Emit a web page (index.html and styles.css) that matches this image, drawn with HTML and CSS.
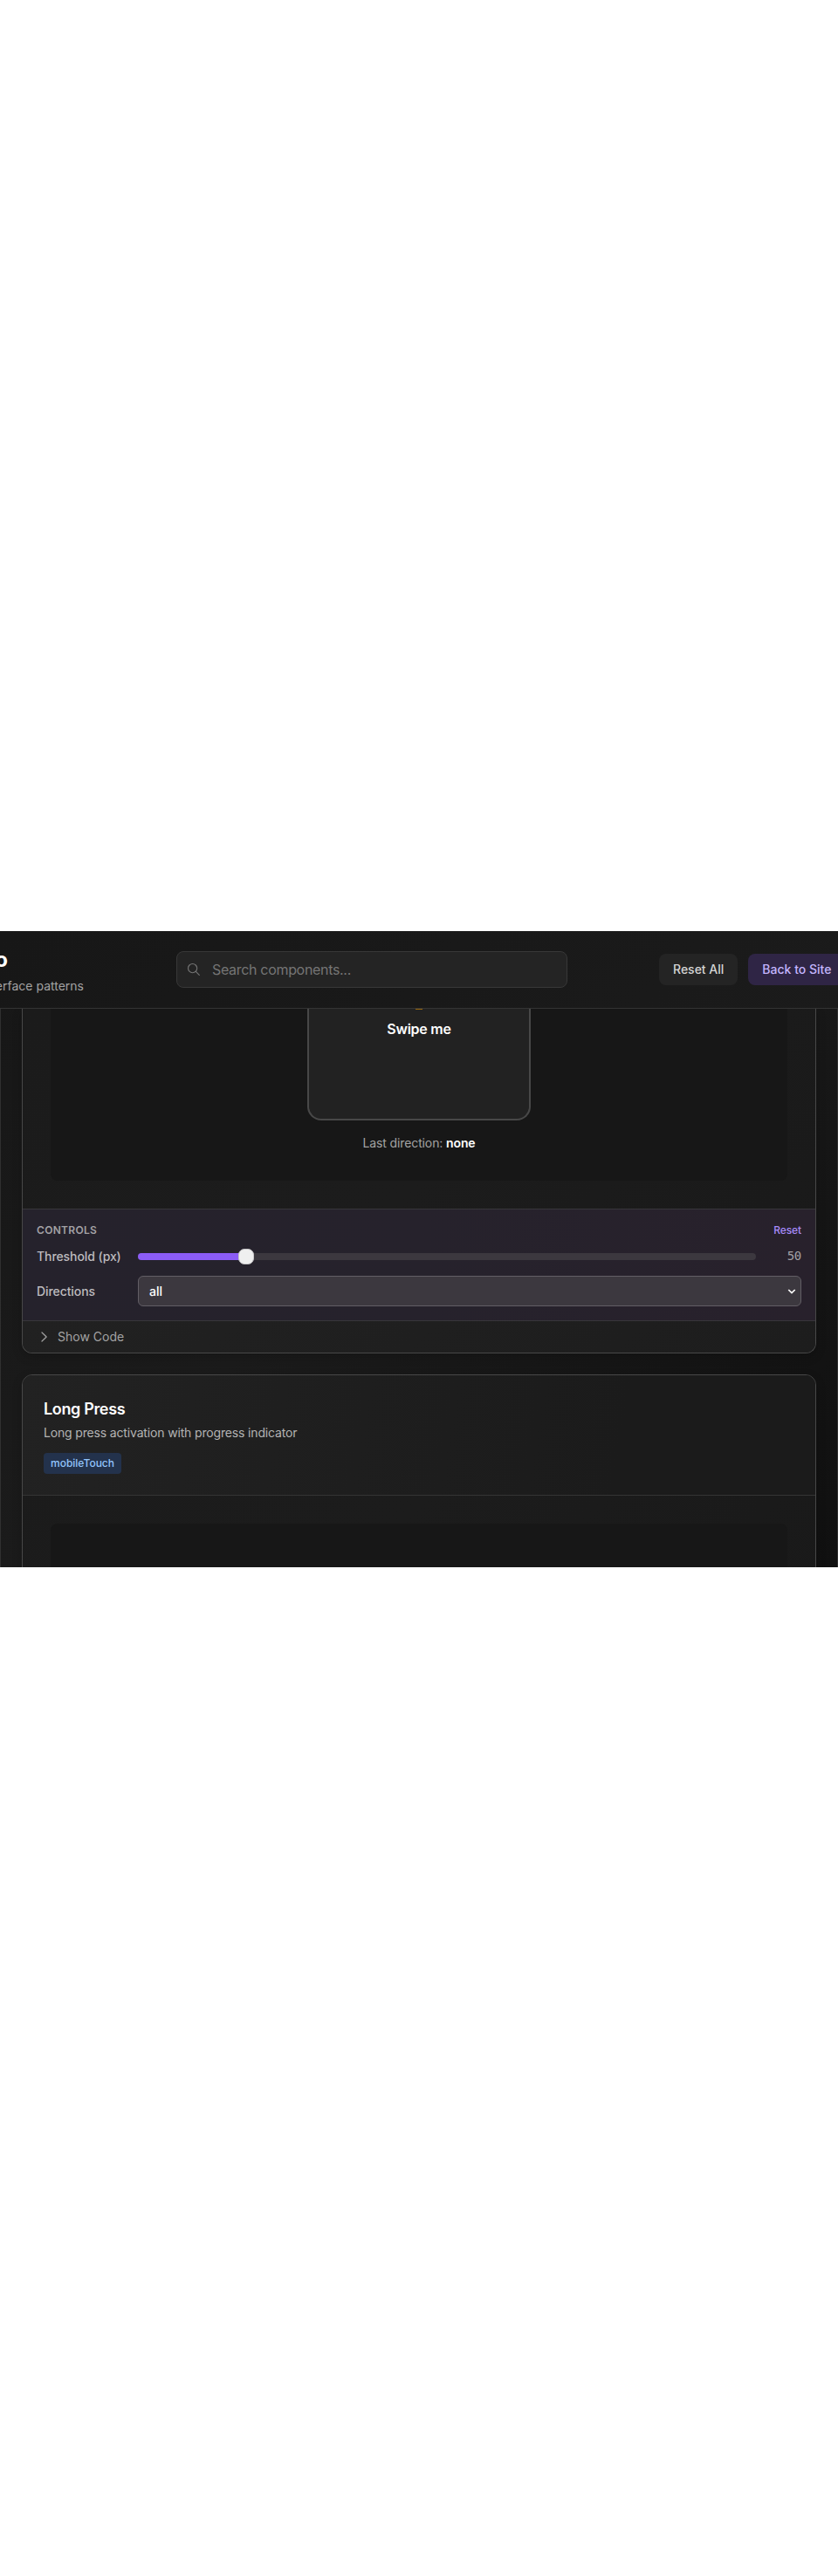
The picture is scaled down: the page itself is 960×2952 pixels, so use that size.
FILE: index.html
```
<!DOCTYPE html>
<html lang="en">
<head>
<meta charset="utf-8">
<title>Component Demo</title>
<link rel="stylesheet" href="styles.css">
</head>
<body>
<div class="viewport">
  <header class="header">
    <div class="brand">
      <h1 class="brand-title">o</h1>
      <p class="brand-sub">erface patterns</p>
    </div>
    <div class="search">
      <svg class="search-icon" viewBox="0 0 16 16" fill="none" stroke="currentColor" stroke-width="1.15" stroke-linecap="round"><circle cx="6.6" cy="6.6" r="5.1"/><path d="M10.4 10.4L14.3 14.3"/></svg>
      <span class="search-text">Search components...</span>
    </div>
    <div class="actions">
      <button class="btn">Reset All</button>
      <button class="btn btn-primary">Back to Site</button>
    </div>
  </header>
  <main class="content">
    <section class="card card-swipe">
      <div class="card-body">
        <div class="demo">
          <div class="swipe"><span class="swipe-mark"></span><span class="swipe-label">Swipe me</span></div>
          <p class="direction">Last direction: <strong>none</strong></p>
        </div>
      </div>
      <div class="controls">
        <div class="controls-head"><span class="controls-title">Controls</span><span class="reset">Reset</span></div>
        <div class="control control-range">
          <span class="label">Threshold (px)</span>
          <div class="track"><div class="fill"></div><div class="thumb"></div></div>
          <span class="value">50</span>
        </div>
        <div class="control">
          <span class="label">Directions</span>
          <div class="select"><span>all</span><svg class="select-arrow" viewBox="0 0 10 8" fill="none" stroke="currentColor" stroke-width="1.7"><path d="M1.3 2L5 5.6L8.7 2"/></svg></div>
        </div>
      </div>
      <div class="code"><svg class="chevron" viewBox="0 0 16 16" fill="none" stroke="currentColor" stroke-width="1.2" stroke-linecap="round" stroke-linejoin="round"><path d="M6 3L11.2 8L6 13"/></svg><span>Show Code</span></div>
    </section>
    <section class="card card-press">
      <div class="card-head">
        <h2 class="card-title">Long Press</h2>
        <p class="card-desc">Long press activation with progress indicator</p>
        <span class="tag">mobileTouch</span>
      </div>
      <div class="card-body press-body"><div class="demo demo-press"></div></div>
    </section>
  </main>
</div>
</body>
</html>
```

FILE: styles.css
```
* { box-sizing: border-box; }
body { margin: 0; background: #fff; font-family: Inter, "Liberation Sans", sans-serif; color: #fff; }
h1, h2, p { margin: 0; }
.viewport { margin: 1067px 0 1156px; width: 960px; height: 729px; overflow: hidden; background: linear-gradient(135deg, #171717, #1b1b1b 45%, #101010); }
.header { width: 1000px; height: 89px; display: flex; align-items: center; background: linear-gradient(135deg, #171717, #1b1b1b); border-bottom: 1px solid #343434; }
.brand { width: 202px; display: flex; flex-direction: column; flex: none; padding-top: 2px; }
.brand-title { width: 9px; display: flex; justify-content: flex-end; font-size: 24px; line-height: 32px; font-weight: 700; }
.brand-sub { width: 96px; display: flex; justify-content: flex-end; white-space: nowrap; font-size: 14px; line-height: 20px; color: #a3a3a3; margin-top: 4px; }
.search { width: 448px; height: 42px; border: 1px solid #383838; border-radius: 8px; background: #242424; display: flex; align-items: center; padding-left: 11px; gap: 13px; color: #757575; }
.search-icon { width: 16px; height: 16px; }
.search-text { font-size: 16px; line-height: 24px; letter-spacing: -.32px; }
.actions { margin-left: 105px; display: flex; gap: 12px; flex: none; }
.btn { height: 36px; padding: 0 16px; border: 0; border-radius: 8px; background: #242424; color: #d4d4d4; font: 500 14px/20px Inter, sans-serif; white-space: nowrap; }
.btn-primary { background: #2f2545; color: #c4b5fd; }
.content { height: 640px; border: solid #303030; border-width: 0 1px; padding: 0 24px; overflow: hidden; }
.card { border: 1px solid #484848; background: linear-gradient(135deg, #1b1b1b, #1c1c1c 50%, #191919); box-shadow: 0 4px 12px rgba(0,0,0,.18); }
.card-swipe { height: 395px; border-top: 0; border-radius: 0 0 12px 12px; overflow: hidden; }
.card-body { padding: 0 32px 32px; }
.demo { height: 197px; background: #171717; border-radius: 0 0 8px 8px; display: flex; flex-direction: column; align-items: center; }
.swipe { width: 256px; height: 128px; border: 2px solid #484848; border-top: 0; border-radius: 0 0 16px 16px; background: #222; display: flex; flex-direction: column; align-items: center; flex: none; }
.swipe-mark { width: 8px; height: 1px; background: #99670f; }
.swipe-label { margin-top: 10px; font-size: 16px; line-height: 24px; font-weight: 600; letter-spacing: -.25px; }
.direction { margin-top: 16px; font-size: 14px; line-height: 20px; color: #a3a3a3; letter-spacing: -.12px; }
.direction strong { color: #fff; font-weight: 600; }
.controls { height: 129px; border: solid #38363b; border-width: 1px 0; background: linear-gradient(90deg, #25222c, #26222c 50%, #28212c); padding: 16px; }
.controls-head { height: 16px; display: flex; justify-content: space-between; font-size: 12px; line-height: 16px; }
.controls-title { font-weight: 600; letter-spacing: .3px; text-transform: uppercase; color: #a3a1a5; }
.reset { font-weight: 500; color: #a78bfa; letter-spacing: -.1px; }
.control { display: grid; grid-template-columns: 104px 1fr; gap: 12px; align-items: center; margin-top: 12px; font-size: 14px; line-height: 20px; }
.control-range { grid-template-columns: 104px 1fr 40px; }
.label { font-weight: 500; color: #bdbbbf; white-space: nowrap; letter-spacing: -.08px; }
.track { height: 8px; border-radius: 4px; background: #3c383f; display: flex; align-items: center; }
.fill { width: 117px; height: 8px; border-radius: 4px 0 0 4px; background: #8b5cf6; }
.thumb { width: 18px; height: 18px; margin-left: -2px; border: 1px solid #c8c7c9; border-radius: 7px; background: #efefef; }
.value { text-align: right; font-family: "DejaVu Sans Mono", "Liberation Mono", monospace; font-size: 14px; line-height: 20px; letter-spacing: -.3px; position: relative; top: -1px; color: #a3a1a5; }
.select { height: 35px; border: 1px solid #625e65; border-radius: 6px; background: #3c383f; display: flex; align-items: center; justify-content: space-between; padding: 0 5px 0 12px; font-weight: 500; }
.select-arrow { width: 10px; height: 8px; }
.code { height: 36px; display: flex; align-items: center; gap: 8px; padding-left: 16px; background: linear-gradient(135deg, #212121, #1d1d1d); font-size: 14px; line-height: 20px; color: #a3a3a3; }
.chevron { width: 16px; height: 16px; }
.card-press { margin-top: 24px; height: 300px; border-radius: 12px; overflow: hidden; }
.card-head { height: 138px; padding: 25px 24px 24px; border-bottom: 1px solid #343434; background: linear-gradient(100deg, #222, #1b1b1b 75%); }
.card-title { font-size: 18px; line-height: 28px; font-weight: 600; letter-spacing: -.35px; }
.card-desc { font-size: 14px; line-height: 20px; color: #b4b4b4; margin-top: 3px; letter-spacing: -.16px; }
.tag { display: block; width: 89px; height: 24px; margin-top: 13px; border-radius: 4px; background: #23324c; color: #93c5fd; text-align: center; font-size: 12px; line-height: 24px; font-weight: 500; }
.press-body { padding-top: 32px; }
.demo-press { border-radius: 8px; }
```
